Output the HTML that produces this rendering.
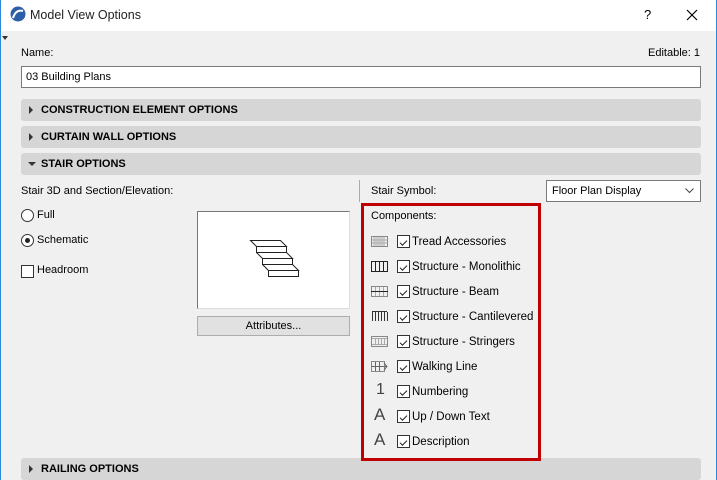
<!DOCTYPE html><html><head><style>
body{margin:0;width:717px;height:480px;overflow:hidden;background:#f0f0f0;font-family:"Liberation Sans",sans-serif;font-size:11.5px;color:#000;position:relative}
.a{position:absolute}
.bar{position:absolute;left:21px;width:680px;height:22px;background:#d6d6d6;border-radius:3px;font-weight:bold;font-size:11px;line-height:22px}
.bar span{position:absolute;left:20px}
.tri{position:absolute;left:8px;top:7px;width:0;height:0;border-left:4px solid #333;border-top:4px solid transparent;border-bottom:4px solid transparent}
.trid{position:absolute;left:7px;top:9px;border-top:4px solid #333;border-left:4px solid transparent;border-right:4px solid transparent}
.cb{position:absolute;width:11px;height:11px;border:1px solid #333;background:#fff}
.row{position:absolute;left:371px;height:16px;line-height:16px}
.row .cb{left:26px;top:1px}
.row .t{position:absolute;left:41px;white-space:nowrap}
.row svg{position:absolute;left:0;top:2px}
</style></head><body>
<div class="a" style="left:0;top:0;width:717px;height:31px;background:#fff"></div>
<div class="a" style="left:0;top:0;width:1px;height:480px;background:#2b88d8"></div>
<div class="a" style="left:716px;top:0;width:1px;height:480px;background:#2b88d8"></div>
<svg class="a" style="left:10px;top:6px" width="16" height="16"><circle cx="8" cy="8" r="7.5" fill="#2c5fa8"/><path d="M3 12 Q6 3 13 5" stroke="#fff" stroke-width="2" fill="none"/></svg>
<div class="a" style="left:30px;top:8px;font-size:12.5px;color:#222">Model View Options</div>
<div class="a" style="left:644px;top:7px;font-size:13px">?</div>
<svg class="a" style="left:686px;top:9px" width="12" height="12"><path d="M1 1L11 11M11 1L1 11" stroke="#000" stroke-width="1.2"/></svg>
<div class="a" style="left:2px;top:36px;border-top:4px solid #333;border-left:3px solid transparent;border-right:3px solid transparent"></div>
<div class="a" style="left:21px;top:47px;font-size:11px">Name:</div>
<div class="a" style="left:648px;top:47px;font-size:11px">Editable: 1</div>
<div class="a" style="left:21px;top:66px;width:678px;height:20px;background:#fff;border:1px solid #7a7a7a;line-height:20px;font-size:11px"><span style="margin-left:4px">03 Building Plans</span></div>
<div class="bar" style="top:99px"><div class="tri"></div><span>CONSTRUCTION ELEMENT OPTIONS</span></div>
<div class="bar" style="top:126px"><div class="tri"></div><span>CURTAIN WALL OPTIONS</span></div>
<div class="bar" style="top:153px"><div class="trid"></div><span>STAIR OPTIONS</span></div>
<div class="bar" style="top:458px"><div class="tri"></div><span>RAILING OPTIONS</span></div>
<div class="a" style="left:21px;top:185px;font-size:11px">Stair 3D and Section/Elevation:</div>
<div class="a" style="left:21px;top:209px;width:11px;height:11px;border:1px solid #333;border-radius:50%;background:#fff"></div>
<div class="a" style="left:37px;top:209px;font-size:11px">Full</div>
<div class="a" style="left:21px;top:234px;width:11px;height:11px;border:1px solid #333;border-radius:50%;background:#fff"><div style="margin:3px;width:5px;height:5px;border-radius:50%;background:#222"></div></div>
<div class="a" style="left:37px;top:234px;font-size:11px">Schematic</div>
<div class="cb" style="left:21px;top:265px"></div>
<div class="a" style="left:37px;top:264px;font-size:11px">Headroom</div>
<div class="a" style="left:197px;top:211px;width:151px;height:96px;background:#fff;border-top:1px solid #777;border-left:1px solid #777;border-right:1px solid #ddd;border-bottom:1px solid #ddd"></div>
<svg class="a" style="left:249px;top:239px" width="52" height="42"><g fill="none" stroke="#222" stroke-width="1"><path d="M1.5 1.5H31.5L37.5 7.5H7.5Z"/><rect x="7.5" y="7.5" width="30" height="6"/><path d="M7.5 13.5L13.5 19.5H43.5L37.5 13.5"/><rect x="13.5" y="19.5" width="30" height="6"/><path d="M13.5 25.5L19.5 31.5H49.5L43.5 25.5"/><rect x="19.5" y="31.5" width="30" height="6"/></g></svg>
<div class="a" style="left:197px;top:316px;width:151px;height:18px;background:#e1e1e1;border:1px solid #adadad;text-align:center;line-height:18px;font-size:11px">Attributes...</div>
<div class="a" style="left:359px;top:180px;width:1px;height:22px;background:#aaa"></div>
<div class="a" style="left:371px;top:185px;font-size:11px">Stair Symbol:</div>
<div class="a" style="left:546px;top:180px;width:153px;height:20px;background:#fff;border:1px solid #7a7a7a;font-size:11px;line-height:20px"><span style="margin-left:5px">Floor Plan Display</span><svg style="position:absolute;right:6px;top:7px" width="9" height="6"><path d="M0.5 0.5L4.5 4.5L8.5 0.5" stroke="#444" fill="none"/></svg></div>
<div class="a" style="left:361px;top:203px;width:174px;height:252px;border:3px solid #c00000"></div>
<div class="a" style="left:371px;top:210px;font-size:11px">Components:</div>
<div class="row" style="top:234px"><svg width="17" height="11"><rect x=".5" y=".5" width="16" height="10" fill="none" stroke="#888"/><path d="M3 1V10M5 1V10M7 1V10M9 1V10M11 1V10M13 1V10M1 4H16M1 7H16" stroke="#aaa"/></svg><div class="cb"></div><div class="t">Tread Accessories</div></div>
<div class="row" style="top:259px"><svg width="17" height="11"><rect x=".5" y=".5" width="16" height="10" fill="none" stroke="#222"/><path d="M4.5 1V10M8.5 1V10M12.5 1V10" stroke="#222"/></svg><div class="cb"></div><div class="t">Structure - Monolithic</div></div>
<div class="row" style="top:284px"><svg width="17" height="11"><rect x=".5" y=".5" width="16" height="10" fill="none" stroke="#888"/><path d="M4.5 1V10M8.5 1V10M12.5 1V10" stroke="#aaa"/><path d="M0 5.5H17" stroke="#222"/></svg><div class="cb"></div><div class="t">Structure - Beam</div></div>
<div class="row" style="top:309px"><svg width="17" height="11"><path d="M1.5 1V10M4.5 1V10M7.5 1V10M10.5 1V10M13.5 1V10M16.5 1V10M1 .5H16" stroke="#333"/></svg><div class="cb"></div><div class="t">Structure - Cantilevered</div></div>
<div class="row" style="top:334px"><svg width="17" height="11"><rect x=".5" y=".5" width="16" height="10" fill="none" stroke="#888"/><path d="M4.5 2V9M7.5 2V9M10.5 2V9M13.5 2V9M1 2.5H16M1 8.5H16" stroke="#aaa"/></svg><div class="cb"></div><div class="t">Structure - Stringers</div></div>
<div class="row" style="top:359px"><svg width="17" height="11"><rect x=".5" y=".5" width="13" height="10" fill="none" stroke="#888"/><path d="M4.5 1V10M8.5 1V10M0 5.5H16M13 2L16 5.5L13 9" stroke="#666" fill="none"/></svg><div class="cb"></div><div class="t">Walking Line</div></div>
<div class="row" style="top:384px"><div style="position:absolute;left:5px;top:-2px;font-size:16px;color:#444">1</div><div class="cb"></div><div class="t">Numbering</div></div>
<div class="row" style="top:409px"><div style="position:absolute;left:3px;top:-2px;font-size:17px;color:#444">A</div><div class="cb"></div><div class="t">Up / Down Text</div></div>
<div class="row" style="top:434px"><div style="position:absolute;left:3px;top:-2px;font-size:17px;color:#444">A</div><div class="cb"></div><div class="t">Description</div></div>
<style>.row .cb::after{content:"";position:absolute;left:2px;top:1px;width:6px;height:3px;border-left:1.2px solid #222;border-bottom:1.2px solid #222;transform:translate(0,3px) rotate(-45deg)}</style>
</body></html>
